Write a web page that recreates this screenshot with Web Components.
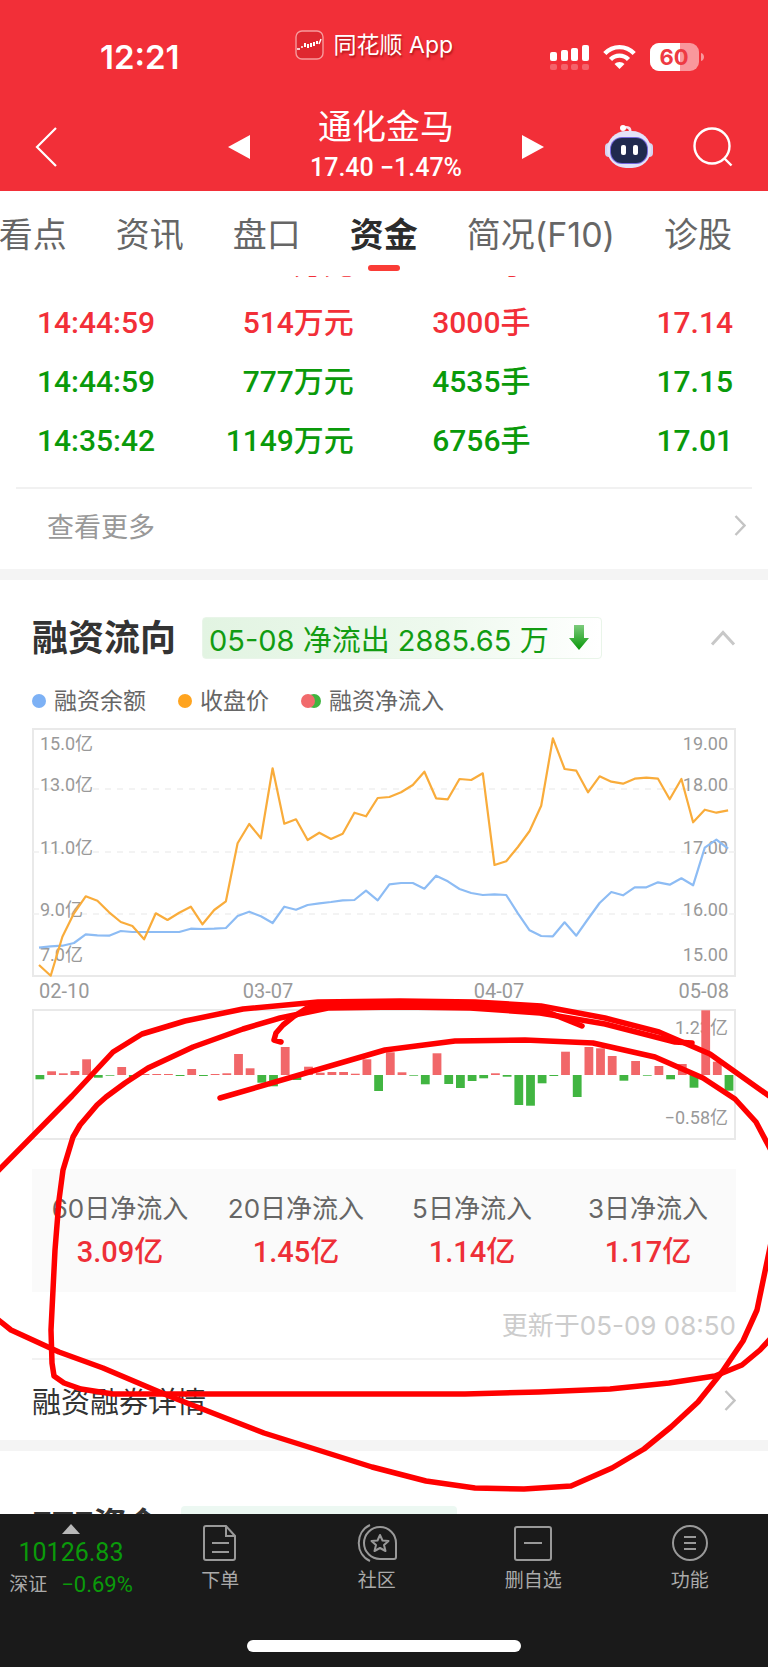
<!DOCTYPE html>
<html lang="zh-CN">
<head>
<meta charset="utf-8">
<meta name="viewport" content="width=device-width, initial-scale=1">
<title>通化金马</title>
<style>
  body {
    margin: 0;
    background: #fff;
    font-family: Inter, "Noto Sans CJK SC", sans-serif;
    --num: Roboto, "Noto Sans CJK SC", sans-serif;
    --red: #f22f38;
    --green: #0a9a0a;
  }
</style>
</head>
<body>
<stock-page></stock-page>

<script>
class BaseElement extends HTMLElement {
  constructor() {
    super();
    this.attachShadow({ mode: "open" });
  }

  connectedCallback() {
    this.shadowRoot.innerHTML = /* html */ `
      <style>
        * { box-sizing: border-box; }
        button { border: 0; padding: 0; background: none; font: inherit; color: inherit; cursor: pointer; }
        a { color: inherit; text-decoration: none; }
        svg { display: block; flex: none; }
        ${this.constructor.styles}
      </style>
      ${this.render()}
    `;
  }
}

class StatusBar extends BaseElement {
  static get styles() {
    return /* css */ `
      :host {
        display: flex;
        align-items: center;
        height: 96px;
        padding: 18px 64px 0 100px;
        color: #fff;
      }
      .time { font-size: 33px; font-weight: 600; line-height: 40px; }
      .app {
        display: flex;
        align-items: center;
        gap: 10px;
        margin-left: 115px;
        padding-bottom: 24px;
        font-size: 23px;
        line-height: 32px;
        text-shadow: 1px 2px 2px #7008;
      }
      .icons { display: flex; align-items: center; gap: 14px; margin-left: auto; }
    `;
  }

  render() {
    return /* html */ `
      <span class="time">12:21</span>
      <div class="app">
        <svg width="29" height="30" viewBox="0 0 29 30">
          <rect x="1" y="1" width="27" height="28" rx="6" fill="#df2730" stroke="#f79a9c" stroke-width="1.4"/>
          <path d="M2 19h3M6 17h2" stroke="#fff" stroke-width="1.6"/>
          <path d="M10 13v4M13 14v4M16 13v4M19 12v4M22 11v3" stroke="#fff" stroke-width="2"/>
          <path d="M24 14l2-5" stroke="#fff" stroke-width="1.4"/>
        </svg>
        <span>同花顺 App</span>
      </div>
      <div class="icons">
        <svg width="39" height="27" viewBox="0 0 39 27" fill="#fff">
          <rect x="0" y="8" width="7" height="9" rx="2"/>
          <rect x="11" y="6" width="7" height="11" rx="2"/>
          <rect x="21" y="4" width="7" height="13" rx="2"/>
          <rect x="32" y="1" width="7" height="16" rx="2"/>
          <g opacity=".25">
            <rect x="0" y="20" width="7" height="6" rx="2"/><rect x="11" y="20" width="7" height="6" rx="2"/>
            <rect x="21" y="20" width="7" height="6" rx="2"/><rect x="32" y="20" width="7" height="6" rx="2"/>
          </g>
        </svg>
        <svg width="33" height="26" viewBox="0 0 33 26" fill="none" stroke="#fff" stroke-width="4.4">
          <path d="M1.800 9.500C10 1 23 1 31.200 9.500"/>
          <path d="M7.500 15.500C12.500 10.300 20.500 10.300 25.500 15.500"/>
          <path d="M16.500 25L11.500 20C14 17.200 19 17.200 21.500 20z" fill="#fff" stroke="none"/>
        </svg>
        <svg width="54" height="28" viewBox="0 0 54 28">
          <rect width="49" height="28" rx="9" fill="#fff" opacity=".5"/>
          <path d="M9 0H30V28H9A9 9 0 0 1 0 19V9A9 9 0 0 1 9 0z" fill="#fff"/>
          <path d="M51 10c4 1 4 7 0 8z" fill="#fff" opacity=".5"/>
          <text x="24" y="22" text-anchor="middle" font-family="Inter" font-size="22" font-weight="700" fill="#ee3a42">60</text>
        </svg>
      </div>
    `;
  }
}

class StockHeader extends BaseElement {
  static get styles() {
    return /* css */ `
      :host {
        display: grid;
        grid-template-columns: 1fr 318px 1fr;
        align-items: center;
        height: 95px;
        padding: 6px 0 0 4px;
        color: #fff;
      }
      .back { justify-self: start; margin-left: 31px; }
      .stock { display: flex; align-items: center; justify-content: space-between; }
      .name { padding-bottom: 2px; text-align: center; }
      h1 { margin: 0; font-size: 34px; font-weight: 400; line-height: 44px; }
      .quote { margin: 0; font: 500 25px/38px var(--num); white-space: nowrap; }
      .tools { display: flex; align-items: center; justify-content: flex-end; gap: 40px; padding-right: 35px; }
    `;
  }

  render() {
    return /* html */ `
      <button class="back" aria-label="返回">
        <svg width="22" height="40" viewBox="0 0 22 40" fill="none" stroke="#fff" stroke-width="2.2"><path d="M21 1L2 20L21 39"/></svg>
      </button>
      <div class="stock">
        <button aria-label="上一只"><svg width="24" height="26" viewBox="0 0 24 26" fill="#fff"><path d="M23 1V25L1 13z"/></svg></button>
        <div class="name">
          <h1>通化金马</h1>
          <p class="quote">17.40 −1.47%</p>
        </div>
        <button aria-label="下一只"><svg width="24" height="26" viewBox="0 0 24 26" fill="#fff"><path d="M1 1V25L23 13z"/></svg></button>
      </div>
      <div class="tools">
        <button aria-label="智能助手">
          <svg width="48" height="44" viewBox="0 0 48 44">
            <path d="M18 3C23 1 26 3 25 8" fill="none" stroke="#f5e4f2" stroke-width="2.600"/>
            <circle cx="18" cy="3" r="3" fill="#fff"/>
            <rect x="0" y="18" width="8" height="14" rx="4" fill="#d5d3ef"/>
            <rect x="40" y="18" width="8" height="14" rx="4" fill="#d5d3ef"/>
            <rect x="2" y="6" width="44" height="37" rx="19" fill="#e3e2f8"/>
            <rect x="5" y="12" width="38" height="27" rx="12" fill="#7467dd"/>
            <rect x="6" y="13" width="36" height="25" rx="11" fill="#202a4e"/>
            <rect x="16" y="20" width="5" height="10" rx="2" fill="#fff"/>
            <rect x="28" y="20" width="5" height="10" rx="2" fill="#fff"/>
          </svg>
        </button>
        <button aria-label="搜索">
          <svg width="40" height="40" viewBox="0 0 40 40" fill="none" stroke="#fff" stroke-width="2.400"><circle cx="19" cy="19" r="17.500"/><path d="M31 31L38.500 38.500"/></svg>
        </button>
      </div>
    `;
  }
}

class TabStrip extends BaseElement {
  static get styles() {
    return /* css */ `
      :host { display: block; background: #fff; overflow: hidden; }
      nav { display: flex; justify-content: flex-end; gap: 49px; height: 85px; padding: 19px 36px 0 0; }
      a {
        display: flex;
        flex-direction: column;
        align-items: center;
        gap: 5px;
        font-size: 34px;
        line-height: 50px;
        color: #666;
        white-space: nowrap;
      }
      .on { color: #2c2c2c; font-weight: 700; }
      .on::after { content: ""; width: 32px; height: 6px; border-radius: 3px; background: #fa3c36; }
    `;
  }

  render() {
    const tabs = ["看点", "资讯", "盘口", "资金", "简况(F10)", "诊股"];
    return `<nav>${tabs.map(t => `<a href="#" class="${t === "资金" ? "on" : ""}">${t}</a>`).join("")}</nav>`;
  }
}

class TradeList extends BaseElement {
  static get styles() {
    return /* css */ `
      :host { display: block; overflow: hidden; margin: 0 16px; padding-bottom: 17px; border-bottom: 2px solid #f1f1f1; }
      /* scrolled: only the foot of the first row is in view */
      table { width: 100%; margin-top: -42px; border-collapse: collapse; font: 500 30px/59px var(--num); }
      td { padding: 0; height: 59px; text-align: right; white-space: nowrap; }
      td:first-child { width: 18%; padding-left: 21px; text-align: left; }
      td:nth-child(2) { width: 27%; }
      td:nth-child(3) { width: 24%; }
      td:last-child { padding-right: 19px; }
      .up { color: var(--red); }
      .down { color: var(--green); }
    `;
  }

  render() {
    const rows = [
      ["up", "", "万元", "手", ""],
      ["up", "14:44:59", "514万元", "3000手", "17.14"],
      ["down", "14:44:59", "777万元", "4535手", "17.15"],
      ["down", "14:35:42", "1149万元", "6756手", "17.01"],
    ];
    return `<table>${rows.map(([dir, ...cells]) =>
      `<tr class="${dir}">${cells.map(c => `<td>${c}</td>`).join("")}</tr>`).join("")}</table>`;
  }
}

class LinkRow extends BaseElement {
  static get styles() {
    return /* css */ `
      :host { display: block; }
      a { display: flex; align-items: center; justify-content: space-between; height: 100%; }
    `;
  }

  render() {
    return /* html */ `
      <a href="#">
        <slot></slot>
        <svg width="12" height="21" viewBox="0 0 12 21" fill="none" stroke="#c4c4c4" stroke-width="2.400"><path d="M1.500 1L10.500 10.500L1.500 20"/></svg>
      </a>
    `;
  }
}

class CardTitle extends BaseElement {
  static get styles() {
    return /* css */ `
      :host { display: flex; align-items: center; gap: 26px; font-size: 36px; }
      h2 { margin: 0; font-size: inherit; font-weight: 700; line-height: 48px; color: #333; white-space: nowrap; }
    `;
  }

  render() {
    return `<h2>${this.getAttribute("label")}</h2><slot></slot>`;
  }
}

class ChartLegend extends BaseElement {
  static get styles() {
    return /* css */ `
      :host { display: flex; gap: 32px; font-size: 23px; line-height: 34px; color: #666; }
      span { display: flex; align-items: center; gap: 8px; }
      i { width: 14px; height: 14px; border-radius: 50%; background: var(--dot); }
    `;
  }

  render() {
    return /* html */ `
      <span><i style="--dot: #7db1f5"></i>融资余额</span>
      <span><i style="--dot: #ffa41f"></i>收盘价</span>
      <span>
        <svg width="20" height="14" viewBox="0 0 20 14"><circle cx="13" cy="7" r="7" fill="#3fb43f"/><circle cx="7" cy="7" r="7" fill="#f16a6c"/></svg>
        融资净流入
      </span>
    `;
  }
}

// x of the n-th trading day, shared by both charts
const dayX = n => 7 + n * 11.68;

class TrendChart extends BaseElement {
  static get styles() {
    return /* css */ `
      :host { display: block; }
      svg { width: 100%; height: auto; }
      text { font-family: var(--num); font-size: 18px; fill: #999; }
      .days { display: grid; grid-template-columns: 203fr 230fr 204fr auto; padding: 0 7px; font: 20px/28px var(--num); color: #999; }
    `;
  }

  line(values, color) {
    const points = values.map((v, n) => `${dayX(n).toFixed(1)},${((v - 24) / 3).toFixed(1)}`).join(" ");
    return `<polyline points="${points}" fill="none" stroke="${color}" stroke-width="2.2" stroke-linejoin="round"/>`;
  }

  render() {
    const balance = [
      683, 679, 677, 669, 643, 646, 647, 633, 636, 636, 636, 636, 636, 626, 627, 626, 624, 588, 575, 589,
      609, 560, 569, 555, 550, 546, 541, 540, 512, 541, 493, 489, 489, 506, 467, 484, 507, 519, 525, 523,
      525, 580, 631, 648, 649, 607, 647, 597, 549, 516, 526, 502, 502, 487, 494, 475, 496, 383, 359, 386,
    ];
    const price = [
      735, 767, 650, 580, 529, 542, 577, 606, 618, 658, 580, 600, 578, 560, 613, 570, 544, 370, 312, 355,
      145, 311, 298, 360, 338, 357, 341, 278, 289, 234, 231, 217, 195, 155, 235, 238, 177, 180, 160, 435,
      424, 381, 333, 257, 55, 147, 152, 217, 169, 185, 191, 176, 173, 176, 238, 177, 307, 269, 278, 271,
    ];
    const marks = [["15.0亿", "19.00", 22], ["13.0亿", "18.00", 63], ["11.0亿", "17.00", 126], ["9.0亿", "16.00", 188], ["7.0亿", "15.00", 233]];
    return /* html */ `
      <svg viewBox="0 0 704 249">
        <rect x="1" y="1" width="702" height="247" fill="none" stroke="#e9e9e9" stroke-width="2"/>
        <path d="M1 61H703M1 124H703M1 186H703" stroke="#efefef" stroke-width="1.500" stroke-dasharray="6 6"/>
        ${marks.map(([l, r, y]) => `<text x="8" y="${y}">${l}</text><text x="696" y="${y}" text-anchor="end">${r}</text>`).join("")}
        ${this.line(balance, "#8dbcf4")}
        ${this.line(price, "#f9ac3b")}
      </svg>
      <div class="days"><span>02-10</span><span>03-07</span><span>04-07</span><span>05-08</span></div>
    `;
  }
}

class InflowChart extends BaseElement {
  static get styles() {
    return /* css */ `
      :host { display: block; }
      svg { width: 100%; height: auto; }
      text { font-family: var(--num); font-size: 18px; fill: #999; }
    `;
  }

  render() {
    const flow = [
      -13, 11, 5, 12, 47, -8, -2, 24, -8, 3, 3, 3, -3, 18, -3, 3, 5, 63, 20, -23,
      -34, 84, -15, 25, 7, 9, 9, 4, 47, -48, 68, 8, -2, -28, 65, -27, -39, -18, -10, 5,
      -5, -90, -92, -25, -3, 70, -66, 84, 80, 57, -17, 42, -2, 27, -13, 33, -38, 194, 40, -47,
    ];
    const bars = flow.map((v, n) => {
      const h = Math.abs(v) / 3;
      const y = v > 0 ? 66 - h : 66;
      return `<rect x="${(dayX(n) - 3.5).toFixed(1)}" y="${y.toFixed(1)}" width="8.8" height="${h.toFixed(1)}" fill="${v > 0 ? "#f16769" : "#41b541"}"/>`;
    }).join("");
    return /* html */ `
      <svg viewBox="0 0 704 131">
        <rect x="1" y="1" width="702" height="129" fill="none" stroke="#e9e9e9" stroke-width="2"/>
        <text x="696" y="25" text-anchor="end">1.23亿</text>
        <text x="696" y="115" text-anchor="end">−0.58亿</text>
        ${bars}
      </svg>
    `;
  }
}

class StatItem extends BaseElement {
  static get styles() {
    return /* css */ `
      :host { display: block; flex: 1; text-align: center; white-space: nowrap; }
      .label { font-size: 26px; line-height: 44px; color: #666; }
      .value { font: 500 29px/42px var(--num); color: #ee2f37; }
    `;
  }

  render() {
    return `<div class="label">${this.getAttribute("label")}</div><div class="value"><slot></slot></div>`;
  }
}

class FlowCard extends BaseElement {
  static get styles() {
    return /* css */ `
      :host { display: block; padding: 34px 32px 0; }
      .badge {
        display: flex;
        align-items: center;
        gap: 20px;
        height: 42px;
        padding: 0 12px 0 6px;
        border: 1px solid #e9f5e9;
        border-radius: 4px;
        background: linear-gradient(90deg, #e2f4e2, #eef9ee 60%, #fff);
        font-size: 29px;
        color: #129c12;
        white-space: nowrap;
      }
      .fold { margin-left: auto; }
      chart-legend { margin: 22px 0 10px; }
      inflow-chart { margin-top: 4px; }
      .stats { display: flex; height: 123px; margin-top: 29px; padding-top: 18px; background: #fafafa; }
      .updated { margin: 16px 0 0; font-size: 26px; line-height: 36px; text-align: right; color: #ccc; }
      link-row { height: 82px; margin-top: 14px; border-top: 2px solid #f2f2f2; font-size: 29px; color: #333; }
    `;
  }

  render() {
    return /* html */ `
      <card-title label="融资流向">
        <span class="badge">05-08 净流出 2885.65 万
          <svg width="20" height="26" viewBox="0 0 20 26">
            <defs><linearGradient id="g" x2="0" y2="1"><stop stop-color="#7ccb7c"/><stop offset="1" stop-color="#089808"/></linearGradient></defs>
            <path d="M5 0H15V13H20L10 25L0 13H5z" fill="url(#g)"/>
          </svg>
        </span>
        <button class="fold" aria-label="收起">
          <svg width="26" height="16" viewBox="0 0 26 16" fill="none" stroke="#c8c8c8" stroke-width="3"><path d="M2 14.500L13 2.500L24 14.500"/></svg>
        </button>
      </card-title>
      <chart-legend></chart-legend>
      <trend-chart></trend-chart>
      <inflow-chart></inflow-chart>
      <div class="stats">
        <stat-item label="60日净流入">3.09亿</stat-item>
        <stat-item label="20日净流入">1.45亿</stat-item>
        <stat-item label="5日净流入">1.14亿</stat-item>
        <stat-item label="3日净流入">1.17亿</stat-item>
      </div>
      <p class="updated">更新于05-09 08:50</p>
      <link-row>融资融券详情</link-row>
    `;
  }
}

class NavItem extends BaseElement {
  static get styles() {
    return /* css */ `
      :host { display: block; flex: 1; }
      button { display: flex; flex-direction: column; align-items: center; gap: 5px; width: 100%; font-size: 19px; line-height: 28px; }
    `;
  }

  render() {
    return `<button><slot name="icon"></slot><slot></slot></button>`;
  }
}

class BottomBar extends BaseElement {
  static get styles() {
    return /* css */ `
      :host { display: block; background: #1a1a1a; color: #aaa; }
      .row { display: flex; padding-top: 10px; }
      .index { display: flex; flex-direction: column; align-items: center; width: 142px; font-family: var(--num); font-size: 25px; line-height: 36px; }
      .index b { color: var(--green); font-weight: 400; }
      .index span { display: flex; align-items: center; gap: 14px; font-size: 22px; line-height: 28px; }
      .index small { font-size: 19px; }
      .home { width: 274px; height: 12px; margin: 41px auto 15px; border-radius: 6px; background: #fff; }
    `;
  }

  render() {
    const icon = shapes => `<svg slot="icon" width="40" height="38" viewBox="0 0 40 38" fill="none" stroke="#999" stroke-width="2">${shapes}</svg>`;
    return /* html */ `
      <div class="row">
        <button class="index">
          <svg width="18" height="11" viewBox="0 0 18 11" fill="#b8b8b8"><path d="M9 0L18 10H0z"/></svg>
          <b>10126.83</b>
          <span><small>深证</small><b>−0.69%</b></span>
        </button>
        <nav-item>${icon(`<path d="M6 2H26L35 12V34Q35 36 33 36H6Q4 36 4 34V4Q4 2 6 2zM26 2V12H35M12 19H29M12 28H29"/>`)}下单</nav-item>
        <nav-item>${icon(`<path d="M23 3A16 16 0 0 0 23 35H37Q39 35 39 33V19A16 16 0 0 0 23 3zM13 1C-2 8-2 30 13 37"/><path d="M23 11L25.500 16.500L31.500 17L27 21L28.500 27L23 24L17.500 27L19 21L14.500 17L20.500 16.500z" stroke-linejoin="round"/>`)}社区</nav-item>
        <nav-item>${icon(`<rect x="2" y="3" width="36" height="33" rx="2"/><path d="M11 19H29"/>`)}删自选</nav-item>
        <nav-item>${icon(`<circle cx="20" cy="19" r="17"/><path d="M14 13H26M14 19H26M14 25H26"/>`)}功能</nav-item>
      </div>
      <div class="home"></div>
    `;
  }
}

// freehand marker strokes drawn over the page
class InkLayer extends BaseElement {
  static get styles() {
    return /* css */ `
      :host { position: absolute; inset: 0; overflow: hidden; pointer-events: none; }
      svg { width: 100%; height: 100%; }
    `;
  }

  render() {
    const strokes = [
      "220,1098 385,1050 455,1041 525,1040 593,1043 655,1057 703,1078 735,1099 756,1122 774,1156 780,1200 768,1257 757,1310 743,1341 722,1372 698,1402 671,1427 644,1449 612,1468 571,1486 524,1489 475,1488 426,1481 372,1467 264,1433 169,1396 103,1368 59,1352 11,1330 -4,1318",
      "-4,1173 72,1096 113,1052 142,1034 185,1021 243,1009 318,1002 400,1001 475,1002 541,1006 605,1018 659,1032 710,1054 772,1098",
      "772,1337 760,1350 742,1365 715,1376 669,1383 610,1389 539,1392 465,1394 113,1394 81,1389 64,1383 54,1376 52,1363 51,1330 55,1250 59,1200 63,1170 73,1137 80,1125 97,1105 106,1097 125,1083 148,1068 193,1047 243,1029 280,1018 328,1008 400,1007 470,1008 540,1013 605,1024 640,1033 675,1042 692,1043",
      "281,1042 274,1040 276,1033 283,1025 293,1017 307,1008 340,1004 430,1004 510,1007 545,1011 582,1026",
    ];
    return `<svg viewBox="0 0 768 1667" preserveAspectRatio="none" fill="none" stroke="#f00" stroke-width="5.5" stroke-linejoin="round" stroke-linecap="round">
      ${strokes.map(p => `<polyline points="${p}"/>`).join("")}
    </svg>`;
  }
}

class StockPage extends BaseElement {
  static get styles() {
    return /* css */ `
      :host { position: relative; display: flex; flex-direction: column; height: 100vh; overflow: hidden; }
      header { background: var(--red); }
      header, tab-strip, bottom-bar { flex: none; }
      main { flex: 1; min-height: 0; overflow: hidden; }
      .more { box-sizing: border-box; height: 80px; padding: 0 22px 8px 47px; font-size: 27px; color: #999; }
      hr { height: 11px; margin: 0; border: 0; background: #f4f4f4; }
      .next { padding: 49px 32px 0; gap: 22px; font-size: 33px; }
      .hint { width: 276px; height: 36px; border-radius: 4px; background: #ecf8f2; }
    `;
  }

  render() {
    return /* html */ `
      <header>
        <status-bar></status-bar>
        <stock-header></stock-header>
      </header>
      <tab-strip></tab-strip>
      <main>
        <trade-list></trade-list>
        <link-row class="more">查看更多</link-row>
        <hr>
        <flow-card></flow-card>
        <hr>
        <card-title class="next" label="ETF资金"><div class="hint"></div></card-title>
      </main>
      <bottom-bar></bottom-bar>
      <ink-layer></ink-layer>
    `;
  }
}

customElements.define("status-bar", StatusBar);
customElements.define("stock-header", StockHeader);
customElements.define("tab-strip", TabStrip);
customElements.define("trade-list", TradeList);
customElements.define("link-row", LinkRow);
customElements.define("card-title", CardTitle);
customElements.define("chart-legend", ChartLegend);
customElements.define("trend-chart", TrendChart);
customElements.define("inflow-chart", InflowChart);
customElements.define("stat-item", StatItem);
customElements.define("flow-card", FlowCard);
customElements.define("nav-item", NavItem);
customElements.define("bottom-bar", BottomBar);
customElements.define("ink-layer", InkLayer);
customElements.define("stock-page", StockPage);
</script>
</body>
</html>
